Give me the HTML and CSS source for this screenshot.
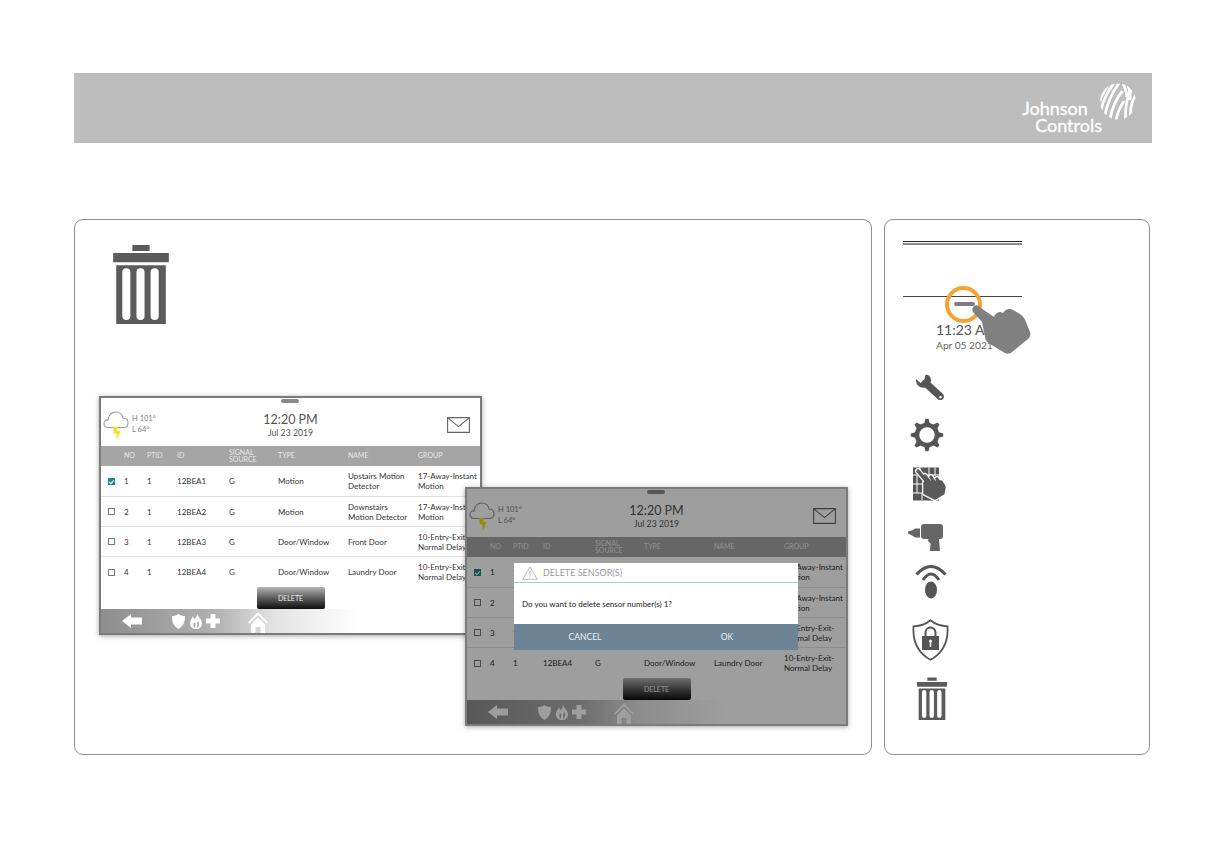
FILE: index.html
```html
<!DOCTYPE html>
<html lang="en">
<head>
<meta charset="utf-8">
<title>Delete sensor</title>
<link rel="stylesheet" href="styles.css">
</head>
<body>
<svg class="sprite" aria-hidden="true">
  <defs>
    <symbol id="trash" viewBox="0 0 55 79">
      <path fill-rule="evenodd" d="M19 1h17v6H19zM0 9h55v9H0zM3 21h49v58H3zM13 24a4 4 0 0 0-4 4v43a4 4 0 0 0 8 0V28a4 4 0 0 0-4-4zM27 24a4 4 0 0 0-4 4v43a4 4 0 0 0 8 0V28a4 4 0 0 0-4-4zM41 24a4 4 0 0 0-4 4v43a4 4 0 0 0 8 0V28a4 4 0 0 0-4-4z"/>
    </symbol>
    <symbol id="hand" viewBox="0 0 60 50" preserveAspectRatio="none">
      <path d="M2 1C4 0 6 0 7.500 2L22 12C24 7 28 6 31 8 33 4 38 3 41 5L48 9C51 11 53 14 54 17L58 27C59 30 58 32 56 34L40 47C38 49 35 49 33 48L18 39C15 37 13 35 13 32L10 17 1 7C0 5 0 3 2 1Z"/>
    </symbol>
    <symbol id="wall-hand" viewBox="0 0 33 34">
      <path d="M5 4 16 17M12 9 18 17M18 10 22 17M24 12 27 18"/>
      <path d="M12 16 28 15 31 20 30 26 22 31 12 26Z"/>
    </symbol>
    <symbol id="cloud" viewBox="0 0 26 30">
      <path fill="none" stroke="#9a9a9a" stroke-width="1.1" d="M5 17.500C2.500 17.500 1 16 1 13.500 1 11 3 9.600 5 10 5.500 6 8 2 13 2c4 0 6.500 3 7 6 3 0 5 2 5 5s-2 4.500-4.500 4.500Z"/>
      <path fill="#f2e21e" d="M10 17h5l-1 4h3.500L14 30l-.5-6.500H11Z"/>
    </symbol>
    <symbol id="mail" viewBox="0 0 23 16">
      <path fill="none" stroke="#666" stroke-width="1.1" d="M.6.6h21.800v14.800H.6zM.6.6l10.900 9 10.900-9"/>
    </symbol>
    <symbol id="arrow" viewBox="0 0 20 14"><path d="M0 7 9 0v3.500h11v7H9V14Z"/></symbol>
    <symbol id="shield" viewBox="0 0 13 15"><path d="M6.500 0C8.500 1.500 10.500 2 13 2c0 6-1.500 10-6.500 13C1.500 12 0 8 0 2c2.500 0 4.500-.5 6.500-2Z"/></symbol>
    <symbol id="flame" viewBox="0 0 12 15"><path fill-rule="evenodd" d="M7 0c1 3 5 5 5 9.500C12 13 9.500 15 6 15S0 13 0 9.500C0 6 2 5 3 2c.5 2 1 3 2 3 1-1.500 2-3 2-5ZM4 8C3 10 3 12 4.500 14L5.500 10ZM8 6.500C7 9 7 12 7.500 14 9.500 12 9.500 9 8 6.500Z"/></symbol>
    <symbol id="plus" viewBox="0 0 14 14"><path d="M4.500 0h5v4.500H14v5H9.500V14h-5V9.500H0v-5h4.500Z"/></symbol>
    <symbol id="home" viewBox="0 0 20 21"><path d="M10 0 20 10.500 18.800 11.700 10 3 1.200 11.700 0 10.500ZM3 12.500 10 5.500l7 7V21h-4.500v-6h-5v6H3Z"/></symbol>
    <clipPath id="globe-clip"><circle cx="18" cy="18.500" r="18"/></clipPath>
  </defs>
</svg>

<header class="band">
  <div class="logo">
    <div class="logo-words">
      <span class="logo-line">Johnson</span>
      <span class="logo-line logo-line-two">Controls</span>
    </div>
    <svg class="globe" viewBox="0 0 36 37" fill="none" stroke="#fff">
      <g stroke-width="2.800" clip-path="url(#globe-clip)">
        <path d="M0 18C2 12 5 6 9 1"/>
        <path d="M1 27C3 18 8 8 14 0"/>
        <path d="M5 32C7 21 12 10 19 0"/>
        <path d="M10 36C12 25 16 16 22.500 8"/>
        <path d="M16 38C17 30 20 24 24 18"/>
        <path d="M23 0C25 5 26.500 9 27 14"/>
        <path d="M28 2C30 8 30.500 12 30 17"/>
        <path d="M31.500 7C27 14 25 22 25.500 37"/>
        <path d="M36 12C31.500 18 30 25 30.500 34"/>
      </g>
    </svg>
  </div>
</header>

<main class="cards">
  <section class="card card-main">
    <svg class="trash-big"><use href="#trash"/></svg>

    <div class="screen screen-back">
      <div class="screen-handle"></div>
      <div class="screen-top">
        <svg class="cloud"><use href="#cloud"/></svg>
        <div class="temps"><span>H 101°</span><span>L 64°</span></div>
        <div class="clock"><span class="clock-time">12:20 PM</span><span class="clock-date">Jul 23 2019</span></div>
        <svg class="mail"><use href="#mail"/></svg>
      </div>
      <div class="row row-head">
        <span></span><span>NO</span><span>PTID</span><span>ID</span><span>SIGNAL<br>SOURCE</span><span>TYPE</span><span>NAME</span><span>GROUP</span>
      </div>
      <div class="row row-first">
        <span class="check check-on"></span><span>1</span><span>1</span><span>12BEA1</span><span>G</span><span>Motion</span><span>Upstairs Motion<br>Detector</span><span>17-Away-Instant<br>Motion</span>
      </div>
      <div class="row">
        <span class="check"></span><span>2</span><span>1</span><span>12BEA2</span><span>G</span><span>Motion</span><span>Downstairs<br>Motion Detector</span><span>17-Away-Instant<br>Motion</span>
      </div>
      <div class="row">
        <span class="check"></span><span>3</span><span>1</span><span>12BEA3</span><span>G</span><span>Door/Window</span><span>Front Door</span><span>10-Entry-Exit-<br>Normal Delay</span>
      </div>
      <div class="row row-last">
        <span class="check"></span><span>4</span><span>1</span><span>12BEA4</span><span>G</span><span>Door/Window</span><span>Laundry Door</span><span>10-Entry-Exit-<br>Normal Delay</span>
      </div>
      <div class="action"><button class="delete">DELETE</button></div>
      <div class="bar">
        <svg class="bar-arrow"><use href="#arrow"/></svg>
        <svg class="bar-shield"><use href="#shield"/></svg>
        <svg class="bar-flame"><use href="#flame"/></svg>
        <svg class="bar-plus"><use href="#plus"/></svg>
        <svg class="bar-home"><use href="#home"/></svg>
      </div>
    </div>

    <div class="screen screen-front">
      <div class="screen-handle"></div>
      <div class="screen-top">
        <svg class="cloud"><use href="#cloud"/></svg>
        <div class="temps"><span>H 101°</span><span>L 64°</span></div>
        <div class="clock"><span class="clock-time">12:20 PM</span><span class="clock-date">Jul 23 2019</span></div>
        <svg class="mail"><use href="#mail"/></svg>
      </div>
      <div class="row row-head">
        <span></span><span>NO</span><span>PTID</span><span>ID</span><span>SIGNAL<br>SOURCE</span><span>TYPE</span><span>NAME</span><span>GROUP</span>
      </div>
      <div class="row row-first">
        <span class="check check-on"></span><span>1</span><span>1</span><span></span><span></span><span></span><span></span><span>17-Away-Instant<br>Motion</span>
      </div>
      <div class="row">
        <span class="check"></span><span>2</span><span>1</span><span></span><span></span><span></span><span></span><span>17-Away-Instant<br>Motion</span>
      </div>
      <div class="row">
        <span class="check"></span><span>3</span><span>1</span><span></span><span></span><span></span><span></span><span>10-Entry-Exit-<br>Normal Delay</span>
      </div>
      <div class="row row-last">
        <span class="check"></span><span>4</span><span>1</span><span>12BEA4</span><span>G</span><span>Door/Window</span><span>Laundry Door</span><span>10-Entry-Exit-<br>Normal Delay</span>
      </div>
      <div class="action"><button class="delete">DELETE</button></div>
      <div class="bar">
        <svg class="bar-arrow"><use href="#arrow"/></svg>
        <svg class="bar-shield"><use href="#shield"/></svg>
        <svg class="bar-flame"><use href="#flame"/></svg>
        <svg class="bar-plus"><use href="#plus"/></svg>
        <svg class="bar-home"><use href="#home"/></svg>
      </div>
      <div class="dim"></div>
      <div class="dialog">
        <div class="dialog-title">
          <svg class="warn" viewBox="0 0 16 14" fill="none" stroke="#a9a9a9" stroke-width=".8"><path d="M8 1 15.300 13.300H.7Z"/><path d="M8 5v4.500M8 10.600v1"/></svg>
          <span>DELETE SENSOR(S)</span>
        </div>
        <div class="dialog-body">Do you want to delete sensor number(s) 1?</div>
        <div class="dialog-actions"><span>CANCEL</span><span>OK</span></div>
      </div>
    </div>
  </section>

  <aside class="card card-side">
    <div class="rule-double"></div>
    <div class="rule-single"></div>
    <div class="mini">
      <div class="mini-handle"></div>
      <div class="mini-ring"></div>
      <span class="mini-time">11:23 AM</span>
      <span class="mini-date">Apr 05 2021</span>
      <svg class="mini-hand"><use href="#hand"/></svg>
    </div>

    <ul class="icons">
      <li class="icon-wrench">
        <svg width="30" height="27" viewBox="0 0 30 27"><path fill="#555" fill-rule="evenodd" d="M1 5 5.500 9 9.500 5 10.500.8C14 .5 16 3 16 7L15.500 8.500 28 20C30 22.500 28.500 26.500 25 26 24 26 23 25.500 22 24.500L10 13.500C5 14.500 .5 11 1 5ZM25.500 21.800A1.300 1.300 0 1 0 25.500 24.400 1.300 1.300 0 1 0 25.500 21.800Z"/></svg>
      </li>
      <li class="icon-gear">
        <svg width="34" height="34" viewBox="0 0 34 34" fill="#555">
          <circle cx="17" cy="17" r="10" fill="none" stroke="#555" stroke-width="4.500"/>
          <path d="M14 6 15.500 .8h3L20 6Z"/>
          <path d="M14 6 15.500 .8h3L20 6Z" transform="rotate(45 17 17)"/>
          <path d="M14 6 15.500 .8h3L20 6Z" transform="rotate(90 17 17)"/>
          <path d="M14 6 15.500 .8h3L20 6Z" transform="rotate(135 17 17)"/>
          <path d="M14 6 15.500 .8h3L20 6Z" transform="rotate(180 17 17)"/>
          <path d="M14 6 15.500 .8h3L20 6Z" transform="rotate(225 17 17)"/>
          <path d="M14 6 15.500 .8h3L20 6Z" transform="rotate(270 17 17)"/>
          <path d="M14 6 15.500 .8h3L20 6Z" transform="rotate(315 17 17)"/>
        </svg>
      </li>
      <li class="icon-wall">
        <svg width="33" height="34" viewBox="0 0 33 34">
          <rect width="26" height="33" y=".5" fill="#555"/>
          <path stroke="#fff" stroke-width="1" fill="none" d="M0 8h26M0 17h26M0 26h26M7 .5v8M16 .5v8M22 .5v8M4 8v9M4 17v9M9 26v7M19 26v7"/>
          <use href="#wall-hand" width="33" height="34" fill="#fff" stroke="#fff" stroke-width="6" stroke-linecap="round" stroke-linejoin="round"/>
          <use href="#wall-hand" width="33" height="34" fill="#5a5a5a" stroke="#5a5a5a" stroke-width="3.500" stroke-linecap="round" stroke-linejoin="round"/>
        </svg>
      </li>
      <li class="icon-drill">
        <svg width="35" height="27" viewBox="0 0 35 27" fill="#666"><path d="M0 7.500 5 6 7 4.500H12V13.500H7L5 12 0 9.500Z"/><path d="M13 3C13 1 14 0 16 0h16c2 0 3 1 3 3v9c0 2-1 3-3 3h-1l1 12H22l.5-7.500L20 17l.5-2H16c-2 0-3-1-3-3Z"/></svg>
      </li>
      <li class="icon-wifi">
        <svg width="32" height="34" viewBox="0 0 32 34" fill="none" stroke="#555" stroke-width="3"><path d="M1.500 9.500Q16-6.500 30.500 9.500"/><path d="M8 15Q16 3 24 15"/><ellipse cx="16" cy="25" rx="6" ry="8.500" fill="#555" stroke="none"/></svg>
      </li>
      <li class="icon-shield">
        <svg width="37" height="42" viewBox="0 0 37 42"><path fill="none" stroke="#555" stroke-width="1.800" d="M18.500 1.200C23 5 28.500 7 35.500 7.300 36.500 23 31 34 18.500 40.800 6 34 .5 23 1.500 7.300 8.500 7 14 5 18.500 1.200Z"/><path fill="none" stroke="#555" stroke-width="2" d="M13.500 17v-3.500a5 5 0 0 1 10 0V17"/><rect x="10" y="17" width="17" height="14" fill="#555"/><path stroke="#fff" stroke-width="1.500" d="M18.500 22v6"/><circle cx="18.500" cy="22" r="1.500" fill="#fff"/></svg>
      </li>
      <li class="icon-trash">
        <svg class="trash-small"><use href="#trash"/></svg>
      </li>
    </ul>
  </aside>
</main>
</body>
</html>
```
FILE: styles.css
```css
* { box-sizing: border-box; }
html, body { margin: 0; padding: 0; }
body {
  width: 1224px;
  height: 864px;
  overflow: hidden;
  background: #fff;
  font-family: Lato, "Open Sans", sans-serif;
  color: #333;
}
.sprite { position: absolute; width: 0; height: 0; }

/* Top band */
.band {
  margin: 73px 72px 0 74px;
  height: 70px;
  background: #bdbdbd;
  display: flex;
  justify-content: flex-end;
  align-items: flex-start;
}
.logo { display: flex; align-items: flex-start; margin: 10px 16px 0 0; }
.logo-words {
  display: flex;
  flex-direction: column;
  color: #fff;
  font-size: 18px;
  line-height: 17px;
  margin-top: 17px;
  -webkit-text-stroke: .3px #fff;
}
.logo-line { display: block; }
.logo-line-two { margin-left: 13px; }
.globe { width: 36px; height: 37px; margin-left: -2px; }

/* Cards */
.cards {
  display: flex;
  gap: 12px;
  margin: 76px 0 0 74px;
}
.card {
  border: 1px solid #8f8f8f;
  border-radius: 9px;
  height: 536px;
  background: #fff;
}
.card-main { width: 798px; position: relative; padding: 24px 0 0 38px; }
.card-side { width: 266px; padding: 21px 0 0 18px; }
.trash-big { display: block; width: 56px; height: 80px; fill: #5b5b5b; }

/* Panel screenshots */
.screen {
  position: absolute;
  width: 383px;
  height: 239px;
  border: 2px solid #7b7b7b;
  background: #fff;
  box-shadow: 0 1px 5px rgba(0, 0, 0, .35);
  overflow: hidden;
  display: flex;
  flex-direction: column;
}
.screen-back { left: 24px; top: 176px; }
.screen-front { left: 390px; top: 267px; }
.screen-handle {
  position: absolute;
  left: 180px;
  top: 1px;
  width: 18px;
  height: 4px;
  border-radius: 2px;
  background: #8a8a8a;
}
.screen-top {
  height: 48px;
  flex: none;
  display: flex;
  position: relative;
  align-items: flex-start;
}
.cloud { width: 26px; height: 30px; margin: 12px 0 0 2px; flex: none; }
.temps {
  display: flex;
  flex-direction: column;
  font-size: 7.500px;
  line-height: 11px;
  color: #808080;
  margin: 15px 0 0 3px;
}
.clock {
  position: absolute;
  left: 0;
  right: 0;
  top: 13px;
  display: flex;
  flex-direction: column;
  align-items: center;
  color: #555;
}
.clock-time { font-size: 12.500px; line-height: 17px; }
.clock-date { font-size: 8.700px; line-height: 11px; margin-top: -1px; }
.mail { position: absolute; left: 346px; top: 19px; width: 23px; height: 16px; }

/* Table */
.row {
  flex: none;
  height: 30px;
  display: grid;
  grid-template-columns: 16px 23px 30px 52px 49px 70px 70px 70px;
  padding-left: 7px;
  align-items: center;
  font-size: 8px;
  line-height: 10px;
  color: #333;
  border-bottom: 1px solid #e2e2e2;
  white-space: nowrap;
}
.row-head {
  height: 20px;
  background: #a5a5a5;
  color: #e6e6e6;
  font-size: 7px;
  line-height: 7.500px;
  border-bottom: 0;
}
.row-first { height: 31px; }
.row-last { border-bottom: 0; }
.check {
  display: block;
  width: 7px;
  height: 7px;
  border: 1px solid #777;
  background: #fff;
}
.check-on {
  border-color: #1d8a80;
  background: #1d8a80;
  position: relative;
}
.check-on::after {
  content: "";
  position: absolute;
  left: 1px;
  top: 0;
  width: 2px;
  height: 4px;
  border: solid #fff;
  border-width: 0 1px 1px 0;
  transform: rotate(45deg);
}

/* Bottom */
.action { flex: none; height: 22px; display: flex; justify-content: center; }
.delete {
  width: 68px;
  height: 22px;
  margin: 0;
  padding: 0;
  border: 0;
  border-radius: 2px;
  background: linear-gradient(#b5b5b5, #5c5c5c 50%, #0d0d0d);
  color: #e8e8e8;
  font: 7px Lato, sans-serif;
}
.bar {
  flex: none;
  height: 24px;
  position: relative;
  background: linear-gradient(90deg, #8e8e8e, #b0b0b0 30%, #e2e2e2 45%, #fff 68%);
}
.bar svg { position: absolute; fill: #fff; }
.bar-arrow { left: 21px; top: 5px; width: 20px; height: 14px; }
.bar-shield { left: 71px; top: 5px; width: 13px; height: 15px; }
.bar-flame { left: 89px; top: 5px; width: 12px; height: 15px; }
.bar-plus { left: 105px; top: 5px; width: 14px; height: 14px; }
.bar-home { left: 147px; top: 3px; width: 20px; height: 21px; }

/* Dialog over the second panel */
.dim { position: absolute; inset: 0; background: rgba(0, 0, 0, .38); }
.dialog {
  position: absolute;
  left: 47px;
  top: 74px;
  width: 284px;
  height: 87px;
  background: #fff;
  display: flex;
  flex-direction: column;
}
.dialog-title {
  flex: none;
  height: 20px;
  display: flex;
  align-items: center;
  gap: 5px;
  padding-left: 8px;
  border-bottom: 1px solid #a5cfcf;
  color: #9a9a9a;
  font-size: 9px;
}
.warn { width: 16px; height: 14px; }
.dialog-body {
  flex: none;
  height: 41px;
  padding: 16px 0 0 8px;
  font-size: 8px;
  line-height: 10px;
  color: #222;
}
.dialog-actions {
  flex: 1;
  display: flex;
  background: #6d8497;
  color: #e9eef2;
  font-size: 8.500px;
  align-items: center;
}
.dialog-actions span { width: 142px; text-align: center; }

/* Side card */
.rule-double {
  width: 119px;
  height: 4px;
  border-top: 1px solid #222;
  border-bottom: 2px solid #8c8c8c;
}
.rule-single {
  width: 119px;
  height: 1px;
  background: #444;
  margin-top: 51px;
}
.mini { position: relative; height: 71px; }
.mini-handle {
  position: absolute;
  left: 51px;
  top: 5px;
  width: 21px;
  height: 4px;
  border-radius: 2px;
  background: #7d7d7d;
}
.mini-ring {
  position: absolute;
  left: 42px;
  top: -11px;
  width: 37px;
  height: 37px;
  border: 4px solid #f5a236;
  border-radius: 50%;
}
.mini-time {
  position: absolute;
  left: 33px;
  top: 24px;
  font-size: 14px;
  line-height: 17px;
  color: #555;
  white-space: nowrap;
}
.mini-date {
  position: absolute;
  left: 33px;
  top: 42px;
  font-size: 10.200px;
  line-height: 13px;
  color: #666;
  white-space: nowrap;
}
.mini-hand {
  position: absolute;
  left: 69px;
  top: 8px;
  width: 60px;
  height: 50px;
  fill: #808080;
}

/* Icon column */
.icons { list-style: none; margin: 0; padding: 0; position: relative; }
.icons li { display: block; line-height: 0; }
.icons svg { display: block; }
.icon-wrench { margin: 6px 0 0 12px; }
.icon-gear { margin: 17px 0 0 7px; }
.icon-wall { margin: 15px 0 0 10px; }
.icon-drill { margin: 23px 0 0 5px; }
.icon-wifi { margin: 14px 0 0 12px; }
.icon-shield { margin: 20px 0 0 9px; }
.icon-trash { margin: 16px 0 0 14px; }
.trash-small { width: 30px; height: 43px; fill: #5b5b5b; }
```
